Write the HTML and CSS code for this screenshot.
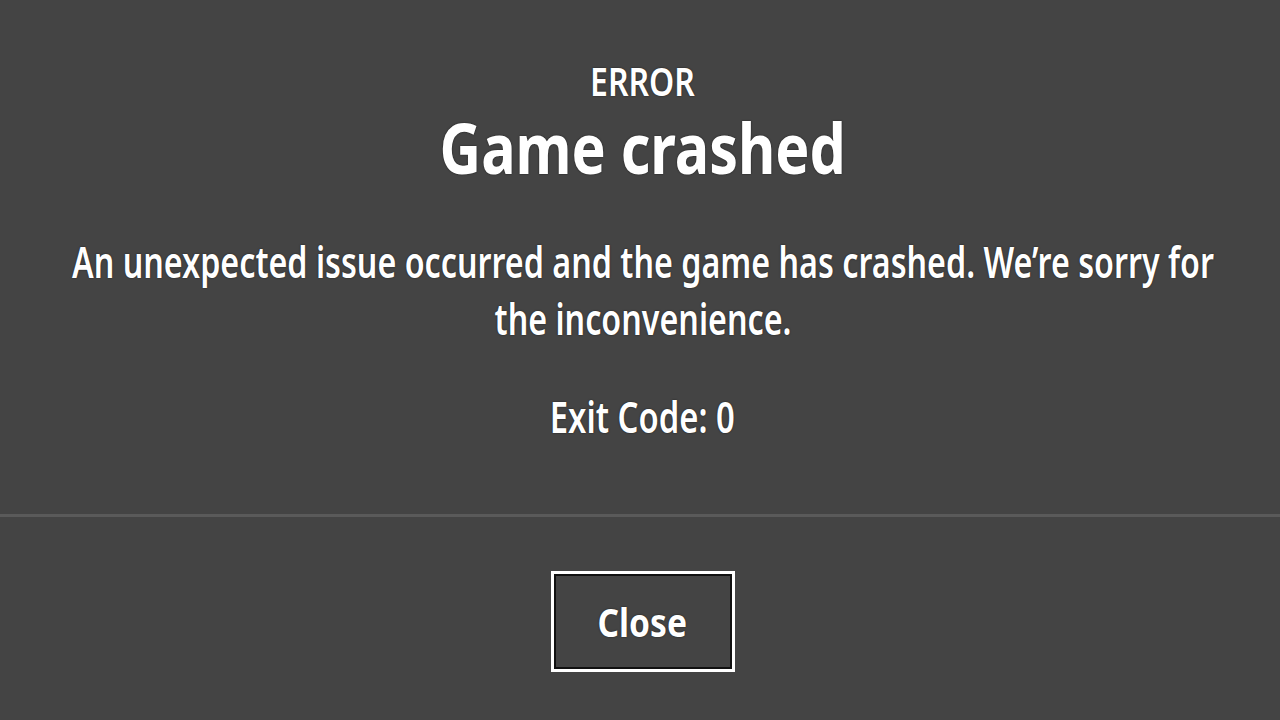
FILE: index.html
```html
<!DOCTYPE html>
<html lang="en">
<head>
  <meta charset="UTF-8">
  <title>Game crashed</title>
  <link rel="stylesheet" href="styles.css">
</head>
<body>
  <div class="crash-screen">
    <div class="crash-info">
      <div class="crash-label">ERROR</div>
      <h1 class="crash-title">Game crashed</h1>
      <p class="crash-message">An unexpected issue occurred and the game has crashed. We’re sorry for the inconvenience.</p>
      <p class="crash-code">Exit Code: 0</p>
    </div>

    <div class="divider"></div>

    <div class="crash-actions">
      <button class="btn btn-close"><span class="btn-text">Close</span></button>
    </div>
  </div>
</body>
</html>
```

FILE: styles.css
```css
* {
  margin: 0;
  padding: 0;
  box-sizing: border-box;
}

:root {
  --bg: #444444;
  --text: #ffffff;
  --line: #5a5a5a;
  --halo: 0 0 2px rgba(0, 0, 0, 0.7);
}

body {
  background: var(--bg);
  color: var(--text);
  font-family: "Noto Sans", "Open Sans", sans-serif;
  width: 1280px;
  height: 720px;
  overflow: hidden;
}

/* text in the original is narrowed horizontally */
.crash-info {
  padding: 57px 0 0 5px;
  display: flex;
  flex-direction: column;
  align-items: center;
  text-align: center;
  text-shadow: var(--halo);
}

.crash-label {
  font-size: 40px;
  line-height: 48px;
  font-weight: 600;
  transform: scaleX(0.8);
}

.crash-title {
  margin-top: 2px;
  font-size: 70px;
  line-height: 80px;
  font-weight: 700;
  transform: scaleX(0.82);
}

.crash-message {
  margin-top: 46px;
  width: 1560px;
  flex-shrink: 0;
  font-size: 43px;
  line-height: 57px;
  font-weight: 600;
  transform: scaleX(0.75);
}

.crash-code {
  margin-top: 41px;
  font-size: 43px;
  line-height: 57px;
  font-weight: 600;
  transform: scaleX(0.763);
}

.divider {
  margin-top: 69px;
  height: 3px;
  background: var(--line);
}

.crash-actions {
  display: flex;
  justify-content: center;
  padding: 54px 0 0 5px;
}

.btn {
  font-family: inherit;
  cursor: pointer;
}

.btn-close {
  width: 184px;
  height: 101px;
  background: var(--bg);
  color: var(--text);
  border: 3px solid #fff;
  box-shadow: inset 0 0 0 2px #111;
  font-size: 40px;
  font-weight: 700;
  text-shadow: var(--halo);
}

.btn-text {
  display: inline-block;
  transform: scaleX(0.84);
}
```
